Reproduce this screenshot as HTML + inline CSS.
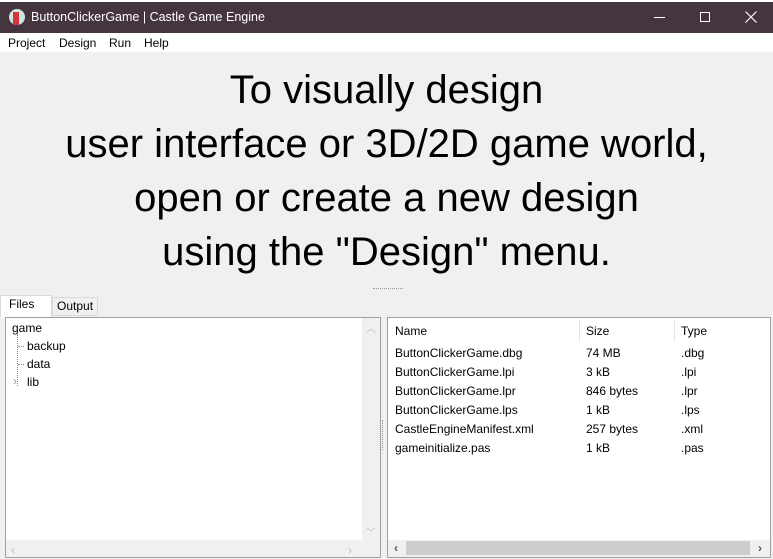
<!DOCTYPE html><html><head><style>
*{margin:0;padding:0;box-sizing:border-box}
body{width:773px;height:559px;overflow:hidden;background:#f0f0f0;font-family:"Liberation Sans",sans-serif;font-size:12px;color:#000;position:relative}
.a{position:absolute}
.t{white-space:nowrap}
</style></head><body>
<div class="a" style="left:0;top:0;width:773px;height:2px;background:#fff"></div>
<div class="a" style="left:0;top:2px;width:773px;height:31px;background:#45353f"></div>
<div class="a" style="left:9px;top:9px;width:16px;height:16px;border-radius:8px;background:#cfe6e0"></div>
<div class="a" style="left:13px;top:12px;width:6px;height:13px;background:#d2353d"></div>
<div class="a t" style="left:31px;top:10px;color:#fff;font-size:12.5px">ButtonClickerGame | Castle Game Engine</div>
<div class="a" style="left:654px;top:17px;width:11px;height:1px;background:#fff"></div>
<div class="a" style="left:700px;top:12px;width:10px;height:10px;border:1px solid #fff"></div>
<svg class="a" style="left:745px;top:11px" width="12" height="12"><path d="M0.5 0.5L11.5 11.5M11.5 0.5L0.5 11.5" stroke="#fff" stroke-width="1.2"/></svg>
<div class="a" style="left:0;top:33px;width:773px;height:19px;background:#fff"></div>
<div class="a t" style="left:8px;top:36px">Project</div>
<div class="a t" style="left:59px;top:36px">Design</div>
<div class="a t" style="left:109px;top:36px">Run</div>
<div class="a t" style="left:144px;top:36px">Help</div>
<div class="a" style="left:0;top:63px;width:773px;text-align:center;font-size:40px;line-height:54px">To visually design<br>user interface or 3D/2D game world,<br>open or create a new design<br>using the "Design" menu.</div>
<div class="a" style="left:373px;top:288px;width:30px;border-top:1px dotted #999"></div>
<div class="a" style="left:0;top:295px;width:52px;height:23px;background:#fff;border:1px solid #d9d9d9;border-bottom:none"></div>
<div class="a t" style="left:9px;top:297px">Files</div>
<div class="a" style="left:52px;top:297px;width:46px;height:19px;background:#f0f0f0;border:1px solid #d9d9d9"></div>
<div class="a t" style="left:57px;top:299px">Output</div>
<div class="a" style="left:5px;top:317px;width:376px;height:241px;background:#fff;border:1px solid #a0a0a0"></div>
<div class="a" style="left:362px;top:318px;width:18px;height:222px;background:#f0f0f0"></div>
<div class="a" style="left:6px;top:540px;width:374px;height:17px;background:#f0f0f0"></div>
<div class="a t" style="left:366px;top:320px;color:#bbb;font-size:10px">︿</div>
<div class="a t" style="left:366px;top:524px;color:#bbb;font-size:10px">﹀</div>
<div class="a t" style="left:11px;top:543px;color:#bbb">‹</div>
<div class="a t" style="left:348px;top:543px;color:#bbb">›</div>
<div class="a t" style="left:12px;top:321px">game</div>
<div class="a" style="left:17px;top:334px;height:52px;border-left:1px dotted #888"></div>
<div class="a" style="left:18px;top:346px;width:6px;border-top:1px dotted #888"></div>
<div class="a" style="left:18px;top:364px;width:6px;border-top:1px dotted #888"></div>
<div class="a t" style="left:27px;top:339px">backup</div>
<div class="a t" style="left:27px;top:357px">data</div>
<div class="a t" style="left:13px;top:374px;color:#999">›</div>
<div class="a t" style="left:27px;top:375px">lib</div>
<div class="a" style="left:382px;top:420px;height:30px;border-left:1px dotted #999"></div>
<div class="a" style="left:387px;top:317px;width:384px;height:241px;background:#fff;border:1px solid #a0a0a0"></div>
<div class="a" style="left:579px;top:320px;height:22px;border-left:1px solid #e5e5e5"></div>
<div class="a" style="left:674px;top:320px;height:22px;border-left:1px solid #e5e5e5"></div>
<div class="a" style="left:388px;top:540px;width:382px;height:17px;background:#f0f0f0"></div>
<div class="a" style="left:406px;top:541px;width:344px;height:14px;background:#cdcdcd"></div>
<div class="a t" style="left:394px;top:541px;color:#555;font-weight:bold">‹</div>
<div class="a t" style="left:758px;top:541px;color:#555;font-weight:bold">›</div>
<div class="a t" style="left:395px;top:324px">Name</div><div class="a t" style="left:586px;top:324px">Size</div><div class="a t" style="left:681px;top:324px">Type</div>
<div class="a t" style="left:395px;top:346px">ButtonClickerGame.dbg</div><div class="a t" style="left:586px;top:346px">74 MB</div><div class="a t" style="left:681px;top:346px">.dbg</div>
<div class="a t" style="left:395px;top:365px">ButtonClickerGame.lpi</div><div class="a t" style="left:586px;top:365px">3 kB</div><div class="a t" style="left:681px;top:365px">.lpi</div>
<div class="a t" style="left:395px;top:384px">ButtonClickerGame.lpr</div><div class="a t" style="left:586px;top:384px">846 bytes</div><div class="a t" style="left:681px;top:384px">.lpr</div>
<div class="a t" style="left:395px;top:403px">ButtonClickerGame.lps</div><div class="a t" style="left:586px;top:403px">1 kB</div><div class="a t" style="left:681px;top:403px">.lps</div>
<div class="a t" style="left:395px;top:422px">CastleEngineManifest.xml</div><div class="a t" style="left:586px;top:422px">257 bytes</div><div class="a t" style="left:681px;top:422px">.xml</div>
<div class="a t" style="left:395px;top:441px">gameinitialize.pas</div><div class="a t" style="left:586px;top:441px">1 kB</div><div class="a t" style="left:681px;top:441px">.pas</div>
</body></html>
